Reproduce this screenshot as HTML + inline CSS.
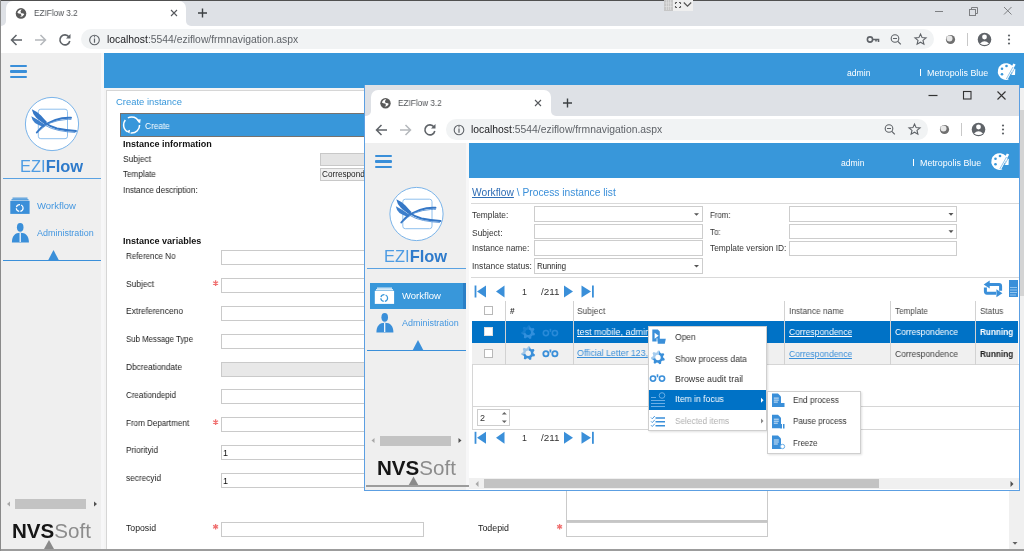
<!DOCTYPE html>
<html><head><meta charset="utf-8">
<style>
*{box-sizing:border-box}
html,body{margin:0;padding:0;width:1024px;height:551px;overflow:hidden;background:#fff;font-family:"Liberation Sans",sans-serif;color:#222}
.a{position:absolute}
.t{position:absolute;white-space:nowrap;line-height:1;will-change:transform}
svg{position:absolute;overflow:visible}
</style></head><body>
<div class="a" style="left:0px;top:0px;width:1024px;height:1px;background:#505050"></div>
<div class="a" style="left:0px;top:1px;width:1024px;height:26px;background:#fff"></div>
<div class="a" style="left:1px;top:1px;width:5px;height:25px;background:#dee1e6;border-bottom-right-radius:5px"></div>
<div class="a" style="left:186px;top:1px;width:838px;height:25px;background:#dee1e6;border-bottom-left-radius:5px"></div>
<div class="a" style="left:6px;top:1px;width:180px;height:8px;background:#dee1e6"></div>
<div class="a" style="left:6px;top:1px;width:180px;height:26px;background:#fff;border-radius:7px 7px 0 0"></div>
<div class="a" style="left:0px;top:0px;width:1px;height:551px;background:#8a8a8a"></div>
<svg style="left:0;top:0" width="1024" height="551"><circle cx="21" cy="13.4" r="5.3" fill="#5a5a5a"/><path d="M17.40,12.80 Q18.20,9.80 21.60,9.20 L20.40,11.70 Q21.50,12.60 20.80,13.70 Q19.00,14.00 17.40,12.80Z" fill="#fff"/><path d="M20.80,13.30 Q23.40,12.80 24.30,14.30 Q23.00,16.70 20.10,17.00 L21.60,15.30 Q20.40,14.40 20.80,13.30Z" fill="#fff"/></svg>
<div class="t" style="left:33.5px;top:8.93px;font-size:9.3px;transform:scaleX(0.8789);transform-origin:0 0;color:#505357">EZIFlow 3.2</div>
<svg style="left:0;top:0" width="1024" height="551"><path d="M171,10 l6,6 M177,10 l-6,6" stroke="#55585c" stroke-width="1.1"/><path d="M202.5,8.5 v9 M198,13 h9" stroke="#3c4043" stroke-width="1.4"/></svg>
<svg style="left:0;top:0" width="1024" height="551"><path d="M935,11.5 h8" stroke="#7d7f82" stroke-width="1"/><rect x="969.5" y="9.5" width="6" height="6" fill="none" stroke="#7d7f82" stroke-width="1"/><path d="M971.5,9.5 v-2 h6 v6 h-2" fill="none" stroke="#7d7f82" stroke-width="1"/><path d="M1004,7 l7.5,7.5 M1011.5,7 l-7.5,7.5" stroke="#7d7f82" stroke-width="1"/></svg>
<div class="a" style="left:1px;top:26px;width:1023px;height:27px;background:#fff"></div>
<div class="a" style="left:81px;top:29px;width:853px;height:20px;background:#f1f3f4;border-radius:10px"></div>
<svg style="left:0;top:0" width="1024" height="551"><path d="M22,40 h-10 M16.5,35 l-5,5 l5,5" stroke="#5f6368" stroke-width="1.5" fill="none"/><path d="M35,40 h10 M40.5,35 l5,5 l-5,5" stroke="#b5b8bc" stroke-width="1.5" fill="none"/><path d="M69,37 a5,5 0 1 0 0.8,4" stroke="#5f6368" stroke-width="1.6" fill="none"/><path d="M70.5,34 v4.5 h-4.5 z" fill="#5f6368"/><circle cx="94.5" cy="40" r="4.8" fill="none" stroke="#5f6368" stroke-width="1.1"/><path d="M94.5,38.5 v4.2" stroke="#5f6368" stroke-width="1.2"/><circle cx="94.5" cy="36.8" r="0.7" fill="#5f6368"/></svg>
<div class="t" style="left:106.8px;top:34.75px;font-size:10.1px;transform:scaleX(1.0263);transform-origin:0 0;color:#5f6368"><span style="color:#202124">localhost</span>:5544/eziflow/frmnavigation.aspx</div>
<svg style="left:0;top:0" width="1024" height="551"><circle cx="870" cy="39.5" r="2.6" fill="none" stroke="#5f6368" stroke-width="1.6"/><path d="M872.5,39.5 h6 v2.5 M876,39.5 v2" stroke="#5f6368" stroke-width="1.6" fill="none"/><circle cx="895" cy="38.5" r="3.8" fill="none" stroke="#5f6368" stroke-width="1.1"/><path d="M893,38.5 h4 M897.8,41.3 l3,3" stroke="#5f6368" stroke-width="1.2"/><path d="M920.5,34 l1.6,3.6 l3.9,0.3 l-3,2.5 l0.9,3.8 l-3.4,-2 l-3.4,2 l0.9,-3.8 l-3,-2.5 l3.9,-0.3 z" fill="none" stroke="#5f6368" stroke-width="1.1"/><circle cx="950.5" cy="39.5" r="4.6" fill="#6f6f6f"/><circle cx="949.5" cy="38.5" r="3" fill="#e8e8e8"/><path d="M967.5,33 v13" stroke="#c8c8c8" stroke-width="1"/><circle cx="984.5" cy="39.5" r="6.8" fill="#5f6368"/><circle cx="984.5" cy="37" r="2.4" fill="#fff"/><path d="M980,43.5 q4.5,-4.5 9,0 q-4.5,3 -9,0z" fill="#fff"/><circle cx="1009" cy="35.5" r="1.1" fill="#5f6368"/><circle cx="1009" cy="39.5" r="1.1" fill="#5f6368"/><circle cx="1009" cy="43.5" r="1.1" fill="#5f6368"/></svg>
<div class="a" style="left:1px;top:53px;width:99.5px;height:498px;background:#efefef"></div>
<div class="a" style="left:100.5px;top:53px;width:3.5px;height:498px;background:#f7f7f8"></div>
<div class="a" style="left:10px;top:64.6px;width:17px;height:2.7px;background:#3a8fd9;border-radius:1px"></div>
<div class="a" style="left:10px;top:70.0px;width:17px;height:2.7px;background:#3a8fd9;border-radius:1px"></div>
<div class="a" style="left:10px;top:75.7px;width:17px;height:2.7px;background:#3a8fd9;border-radius:1px"></div>
<svg style="left:0;top:0" width="1024" height="551"><circle cx="52" cy="124" r="26.6" fill="#fff" stroke="#7ab4ea" stroke-width="1"/><rect x="38.3" y="109.2" width="29.2" height="29.5" rx="2.5" fill="none" stroke="#8fc0ee" stroke-width="1"/><path transform="translate(30,100)" d="M1.8,9.3 Q7,11.5 11,15.5 Q14,19 17,22 L14.8,24.3 Q10.5,21.5 6.5,18 Q2.5,14 1.8,9.3Z" fill="#3577c6"/><path transform="translate(30,100)" d="M1.3,16.3 Q5.5,18.5 9.5,21 Q12.5,23 15.5,25 L14,27.3 Q9,25.5 5,23 Q2,20.5 1.3,16.3Z" fill="#3d7fcc"/><path transform="translate(30,100)" d="M6.8,32.5 Q11,27 16,24 Q24,19.5 32,18.2 Q37,17.5 41,17.8" fill="none" stroke="#3577c6" stroke-width="1.9" stroke-linecap="round"/><path transform="translate(30,100)" d="M9,31 Q14,26 20,23 Q28,20 36,19.5 Q39,19.3 41,19.4" fill="none" stroke="#5a95d8" stroke-width="0.9" stroke-linecap="round"/><path transform="translate(30,100)" d="M13.5,22 Q20,26.5 27,28.5 Q36,30.5 46,31" fill="none" stroke="#3577c6" stroke-width="1.9" stroke-linecap="round"/><path transform="translate(30,100)" d="M14.5,25 Q21,29 29,30.5 Q37,32 45,32.5" fill="none" stroke="#5a95d8" stroke-width="0.9" stroke-linecap="round"/></svg>
<div class="t" style="left:19.5px;top:158.64px;font-size:15.9px;transform:scaleX(1.0371);transform-origin:0 0;"><span style="color:#4e9ce3">EZI</span><span style="font-weight:bold;color:#2f7bcb">Flow</span></div>
<div class="a" style="left:2.5px;top:177.8px;width:98.5px;height:1.3px;background:#5aa2e2"></div>
<svg style="left:0;top:0" width="1024" height="551"><rect x="12.5" y="197.6" width="15" height="1.1" fill="#3a8fd9"/><rect x="11.5" y="199.2" width="17" height="1.1" fill="#3a8fd9"/><rect x="10.3" y="200.79999999999998" width="19.3" height="13.1" fill="#3a8fd9"/><circle cx="19.7" cy="208.1" r="3.4" fill="none" stroke="#fff" stroke-width="1.2" stroke-dasharray="4.5 1.2"/></svg>
<div class="t" style="left:37.3px;top:201.61px;font-size:9.2px;transform:scaleX(1.0343);transform-origin:0 0;color:#4497e0">Workflow</div>
<svg style="left:0;top:0" width="1024" height="551"><ellipse cx="20.2" cy="227.3" rx="3.3" ry="4.4" fill="#3a8fd9"/><path d="M11.9,242.5 C11.9,236 15,232.8 20.4,232.8 C25.8,232.8 28.9,236 28.9,242.5 Z" fill="#3a8fd9"/><path d="M20.2,233 v9" stroke="#fff" stroke-width="1.2"/></svg>
<div class="t" style="left:37.3px;top:228.87px;font-size:8.9px;transform:scaleX(1.0101);transform-origin:0 0;color:#4497e0">Administration</div>
<svg style="left:0;top:0" width="1024" height="551"><path d="M48,260.5 L53.5,250 L59,260.5 Z" fill="#3a8fd9"/></svg>
<div class="a" style="left:2.5px;top:260px;width:98.5px;height:1.3px;background:#3a8fd9"></div>
<div class="a" style="left:15px;top:499px;width:71px;height:10px;background:#c3c3c3"></div>
<svg style="left:0;top:0" width="1024" height="551"><path d="M10,501.5 l-3,2.5 l3,2.5z" fill="#a8a8a8"/><path d="M94,501.5 l3,2.5 l-3,2.5z" fill="#505050"/></svg>
<div class="t" style="left:12px;top:522.05px;font-size:19.9px;transform:scaleX(1.0354);transform-origin:0 0;"><span style="font-weight:bold;color:#161616">NVS</span><span style="color:#8c8c8c">Soft</span></div>
<svg style="left:0;top:0" width="1024" height="551"><path d="M44,549 L49,540 L54,549 Z" fill="#8a8a8a"/></svg>
<div class="a" style="left:1px;top:548.7px;width:103px;height:2.3px;background:#9c9c9c"></div>
<div class="a" style="left:104px;top:53px;width:920px;height:35px;background:#3897da"></div>
<div class="a" style="left:104px;top:88px;width:920px;height:463px;background:#f4f4f4"></div>
<div class="a" style="left:106px;top:90px;width:918px;height:461px;background:#fff;border:1px solid #d6d6d6"></div>
<div class="t" style="left:847px;top:68.82px;font-size:8.6px;transform:scaleX(0.9826);transform-origin:0 0;color:#fff">admin</div>
<div class="a" style="left:919.5px;top:68.6px;width:1px;height:7.8px;background:#fff"></div>
<div class="t" style="left:926.7px;top:68.57px;font-size:8.9px;transform:scaleX(0.9972);transform-origin:0 0;color:#fff">Metropolis Blue</div>
<svg style="left:0;top:0" width="1024" height="551"><path d="M1012.5,66 A8.4,8.4 0 1 0 1009,79.5 L1007.5,78 L1013,69 Z" fill="#fff"/><circle cx="1006.5" cy="66" r="1.3" fill="#3897da"/><circle cx="1002" cy="68.8" r="1.3" fill="#3897da"/><circle cx="1002" cy="74.3" r="1.3" fill="#3897da"/><path d="M1014.5,64 L1007,78" stroke="#fff" stroke-width="2.6"/><path d="M1013,68 L1015.3,69 L1015,75 L1011,75z" fill="#fff"/><path d="M1013,67 L1006.3,79 M1014.8,68 L1008.5,79.5" stroke="#3897da" stroke-width="0.7" opacity="0.8"/></svg>
<div class="t" style="left:116.1px;top:97.63px;font-size:9.3px;transform:scaleX(1.0134);transform-origin:0 0;color:#3897da">Create instance</div>
<div class="a" style="left:120.4px;top:112.8px;width:904px;height:24.6px;background:#3897da;border:1px solid #76726e"></div>
<svg style="left:0;top:0" width="1024" height="551"><circle cx="131.6" cy="125" r="8" fill="none" stroke="#fff" stroke-width="1.5" stroke-dasharray="13.5 3.3"/><path d="M136.5,119.8 l4.2,-0.6 l-0.6,4.2z M129.5,133.5 l-3.2,-2.2 l3.8,-1.6z" fill="#fff"/></svg>
<div class="a" style="left:664.4px;top:0px;width:8.3px;height:10.5px;background:#c6c6c6"></div>
<svg style="left:0;top:0" width="1024" height="551"><path d="M666.5,0 v10 M668.5,0 v10 M670.5,0 v10 M664.5,3 h8 M664.5,6.5 h8" stroke="#e4e4e4" stroke-width="0.6"/></svg>
<div class="a" style="left:672.7px;top:0px;width:20.1px;height:10.5px;background:#efefef"></div>
<svg style="left:0;top:0" width="1024" height="551"><path d="M675.5,2.5 h1.5 M675.5,2.5 v1.5 M680.5,2.5 h-1.5 M680.5,2.5 v1.5 M675.5,7.5 h1.5 M675.5,7.5 v-1.5 M680.5,7.5 h-1.5 M680.5,7.5 v-1.5" stroke="#555" stroke-width="1.1"/><path d="M683.8,2.5 l3.7,3.7 l3.7,-3.7" fill="none" stroke="#555" stroke-width="1.2"/></svg>
<div class="t" style="left:145.2px;top:121.50px;font-size:8.5px;transform:scaleX(0.9720);transform-origin:0 0;color:#fff">Create</div>
<div class="t" style="left:123.3px;top:141.16px;font-size:8.2px;transform:scaleX(1.1014);transform-origin:0 0;font-weight:bold;color:#111">Instance information</div>
<div class="t" style="left:123.3px;top:154.72px;font-size:8.6px;transform:scaleX(0.9766);transform-origin:0 0;color:#1a1a1a">Subject</div>
<div class="t" style="left:123.3px;top:170.02px;font-size:8.6px;transform:scaleX(0.9462);transform-origin:0 0;color:#1a1a1a">Template</div>
<div class="t" style="left:123.3px;top:186.22px;font-size:8.6px;transform:scaleX(0.9476);transform-origin:0 0;color:#1a1a1a">Instance description:</div>
<div class="a" style="left:320px;top:153px;width:60px;height:12.5px;background:#e4e4e4;border:1px solid #c8c8c8"></div>
<div class="a" style="left:320px;top:168px;width:60px;height:13px;background:#efefef;border:1px solid #c8c8c8"></div>
<div class="t" style="left:322px;top:171.06px;font-size:8.2px;color:#222">Correspond</div>
<div class="t" style="left:123px;top:237.76px;font-size:8.2px;transform:scaleX(1.1014);transform-origin:0 0;font-weight:bold;color:#111">Instance variables</div>
<div class="t" style="left:125.7px;top:251.82px;font-size:8.6px;transform:scaleX(0.9334);transform-origin:0 0;color:#1a1a1a">Reference No</div>
<div class="a" style="left:221.2px;top:250.3px;width:160px;height:15px;background:#fff;border:1px solid #cacaca"></div>
<div class="t" style="left:125.7px;top:279.62px;font-size:8.6px;transform:scaleX(0.9766);transform-origin:0 0;color:#1a1a1a">Subject</div>
<svg style="left:0;top:0" width="1024" height="551"><g stroke="#f07070" stroke-width="1.3"><path d="M215.6,280.3 v5.6 M213.1,281.70000000000005 l5,2.8 M213.1,284.5 l5,-2.8"/></g></svg>
<div class="a" style="left:221.2px;top:278.1px;width:160px;height:15px;background:#fff;border:1px solid #cacaca"></div>
<div class="t" style="left:125.7px;top:307.42px;font-size:8.6px;transform:scaleX(0.9780);transform-origin:0 0;color:#1a1a1a">Extreferenceno</div>
<div class="a" style="left:221.2px;top:305.9px;width:160px;height:15px;background:#fff;border:1px solid #cacaca"></div>
<div class="t" style="left:125.7px;top:335.22px;font-size:8.6px;transform:scaleX(0.9125);transform-origin:0 0;color:#1a1a1a">Sub Message Type</div>
<div class="a" style="left:221.2px;top:333.7px;width:160px;height:15px;background:#fff;border:1px solid #cacaca"></div>
<div class="t" style="left:125.7px;top:363.02px;font-size:8.6px;transform:scaleX(0.9606);transform-origin:0 0;color:#1a1a1a">Dbcreationdate</div>
<div class="a" style="left:221.2px;top:361.5px;width:160px;height:15px;background:#e8e8e8;border:1px solid #cacaca"></div>
<div class="t" style="left:125.7px;top:390.82px;font-size:8.6px;transform:scaleX(0.9343);transform-origin:0 0;color:#1a1a1a">Creationdepid</div>
<div class="a" style="left:221.2px;top:389.3px;width:160px;height:15px;background:#fff;border:1px solid #cacaca"></div>
<div class="t" style="left:125.7px;top:418.62px;font-size:8.6px;transform:scaleX(0.9355);transform-origin:0 0;color:#1a1a1a">From Department</div>
<svg style="left:0;top:0" width="1024" height="551"><g stroke="#f07070" stroke-width="1.3"><path d="M215.6,419.3 v5.6 M213.1,420.70000000000005 l5,2.8 M213.1,423.5 l5,-2.8"/></g></svg>
<div class="a" style="left:221.2px;top:417.1px;width:160px;height:15px;background:#fff;border:1px solid #cacaca"></div>
<div class="t" style="left:125.7px;top:446.42px;font-size:8.6px;transform:scaleX(0.9570);transform-origin:0 0;color:#1a1a1a">Priorityid</div>
<div class="a" style="left:221.2px;top:444.9px;width:160px;height:15px;background:#fff;border:1px solid #cacaca"></div>
<div class="t" style="left:223px;top:448.78px;font-size:9px;color:#111">1</div>
<div class="t" style="left:125.7px;top:474.22px;font-size:8.6px;transform:scaleX(0.9643);transform-origin:0 0;color:#1a1a1a">secrecyid</div>
<div class="a" style="left:221.2px;top:472.7px;width:160px;height:15px;background:#fff;border:1px solid #cacaca"></div>
<div class="t" style="left:223px;top:476.58px;font-size:9px;color:#111">1</div>
<div class="t" style="left:125.7px;top:524.02px;font-size:8.6px;transform:scaleX(1.0127);transform-origin:0 0;color:#1a1a1a">Toposid</div>
<svg style="left:0;top:0" width="1024" height="551"><g stroke="#f07070" stroke-width="1.3"><path d="M215.6,524 v5.6 M213.1,525.4 l5,2.8 M213.1,528.2 l5,-2.8"/></g></svg>
<div class="a" style="left:221.2px;top:522px;width:203px;height:15px;background:#fff;border:1px solid #cacaca"></div>
<div class="t" style="left:478px;top:524.02px;font-size:8.6px;transform:scaleX(1.0296);transform-origin:0 0;color:#1a1a1a">Todepid</div>
<svg style="left:0;top:0" width="1024" height="551"><g stroke="#f07070" stroke-width="1.3"><path d="M559.6,524 v5.6 M557.1,525.4 l5,2.8 M557.1,528.2 l5,-2.8"/></g></svg>
<div class="a" style="left:565.5px;top:522.3px;width:202px;height:14.5px;background:#fff;border:1px solid #cacaca"></div>
<div class="a" style="left:565.5px;top:480px;width:202px;height:42px;background:#fff;border:1px solid #cacaca;border-bottom:2px solid #c6c6c6"></div>
<div class="a" style="left:1009px;top:491px;width:15px;height:58px;background:#f0f0f0"></div>
<svg style="left:0;top:0" width="1024" height="551"><path d="M1012.5,542 h5 l-2.5,2.8z" fill="#606060"/></svg>
<div class="a" style="left:104px;top:549px;width:920px;height:2px;background:#9c9c9c"></div>
<div class="a" style="left:1020px;top:88px;width:4px;height:22px;background:#f0f0f0"></div>
<div class="a" style="left:1020px;top:110px;width:4px;height:186px;background:#d4d4d4"></div>
<div class="a" style="left:1020px;top:296px;width:4px;height:195px;background:#f0f0f0"></div>
<div class="a" style="left:364px;top:85px;width:656px;height:406px;border:1px solid #5c9fe2;border-top:none;background:#fff"></div>
<div class="a" style="left:365px;top:85px;width:654px;height:31px;background:#fff"></div>
<div class="a" style="left:365px;top:85px;width:654px;height:5.3px;background:#dee1e6"></div>
<div class="a" style="left:365px;top:85px;width:5.5px;height:31px;background:#dee1e6;border-bottom-right-radius:5px"></div>
<div class="a" style="left:551px;top:85px;width:468px;height:31px;background:#dee1e6;border-bottom-left-radius:5px"></div>
<div class="a" style="left:370.5px;top:90px;width:180.5px;height:8px;background:#dee1e6"></div>
<div class="a" style="left:370.5px;top:90.3px;width:180.5px;height:25.7px;background:#fff;border-radius:7px 7px 0 0"></div>
<svg style="left:0;top:0" width="1024" height="551"><circle cx="385.5" cy="103.2" r="5.2" fill="#5a5a5a"/><path d="M381.90,102.60 Q382.70,99.60 386.10,99.00 L384.90,101.50 Q386.00,102.40 385.30,103.50 Q383.50,103.80 381.90,102.60Z" fill="#fff"/><path d="M385.30,103.10 Q387.90,102.60 388.80,104.10 Q387.50,106.50 384.60,106.80 L386.10,105.10 Q384.90,104.20 385.30,103.10Z" fill="#fff"/></svg>
<div class="t" style="left:397.9px;top:99.33px;font-size:9.3px;transform:scaleX(0.8809);transform-origin:0 0;color:#505357">EZIFlow 3.2</div>
<svg style="left:0;top:0" width="1024" height="551"><path d="M535,100 l6,6 M541,100 l-6,6" stroke="#55585c" stroke-width="1.1"/><path d="M567.5,98.5 v9 M563,103 h9" stroke="#3c4043" stroke-width="1.4"/></svg>
<svg style="left:0;top:0" width="1024" height="551"><path d="M928.5,95.5 h9" stroke="#333" stroke-width="1.2"/><rect x="963.5" y="91.5" width="7.5" height="7.5" fill="none" stroke="#333" stroke-width="1.1"/><path d="M997.5,91.5 l8,8 M1005.5,91.5 l-8,8" stroke="#333" stroke-width="1.1"/></svg>
<div class="a" style="left:365px;top:116px;width:654px;height:27px;background:#fff"></div>
<div class="a" style="left:446px;top:119px;width:482px;height:20.5px;background:#f1f3f4;border-radius:10.25px"></div>
<svg style="left:0;top:0" width="1024" height="551"><path d="M387,130 h-10 M381.5,125 l-5,5 l5,5" stroke="#5f6368" stroke-width="1.5" fill="none"/><path d="M400,130 h10 M405.5,125 l5,5 l-5,5" stroke="#b5b8bc" stroke-width="1.5" fill="none"/><path d="M434,127 a5,5 0 1 0 0.8,4" stroke="#5f6368" stroke-width="1.6" fill="none"/><path d="M435.5,124 v4.5 h-4.5 z" fill="#5f6368"/><circle cx="459" cy="130" r="4.8" fill="none" stroke="#5f6368" stroke-width="1.1"/><path d="M459,128.5 v4.2" stroke="#5f6368" stroke-width="1.2"/><circle cx="459" cy="126.8" r="0.7" fill="#5f6368"/></svg>
<div class="t" style="left:471.2px;top:124.85px;font-size:10.1px;transform:scaleX(1.0263);transform-origin:0 0;color:#5f6368"><span style="color:#202124">localhost</span>:5544/eziflow/frmnavigation.aspx</div>
<svg style="left:0;top:0" width="1024" height="551"><circle cx="889" cy="128.5" r="3.8" fill="none" stroke="#5f6368" stroke-width="1.1"/><path d="M887,128.5 h4 M891.8,131.3 l3,3" stroke="#5f6368" stroke-width="1.2"/><path d="M914.5,124 l1.6,3.6 l3.9,0.3 l-3,2.5 l0.9,3.8 l-3.4,-2 l-3.4,2 l0.9,-3.8 l-3,-2.5 l3.9,-0.3 z" fill="none" stroke="#5f6368" stroke-width="1.1"/><circle cx="944.5" cy="129.5" r="4.6" fill="#6f6f6f"/><circle cx="943.5" cy="128.5" r="3" fill="#e8e8e8"/><path d="M961.5,123 v13" stroke="#c8c8c8" stroke-width="1"/><circle cx="978.5" cy="129.5" r="6.8" fill="#5f6368"/><circle cx="978.5" cy="127" r="2.4" fill="#fff"/><path d="M974,133.5 q4.5,-4.5 9,0 q-4.5,3 -9,0z" fill="#fff"/><circle cx="1003" cy="125.5" r="1.1" fill="#5f6368"/><circle cx="1003" cy="129.5" r="1.1" fill="#5f6368"/><circle cx="1003" cy="133.5" r="1.1" fill="#5f6368"/></svg>
<div class="a" style="left:365px;top:143px;width:100.5px;height:347px;background:#efefef"></div>
<div class="a" style="left:465.5px;top:143px;width:3.5px;height:347px;background:#f7f7f8"></div>
<div class="a" style="left:374.5px;top:154.6px;width:17px;height:2.7px;background:#3a8fd9;border-radius:1px"></div>
<div class="a" style="left:374.5px;top:160.0px;width:17px;height:2.7px;background:#3a8fd9;border-radius:1px"></div>
<div class="a" style="left:374.5px;top:165.7px;width:17px;height:2.7px;background:#3a8fd9;border-radius:1px"></div>
<svg style="left:0;top:0" width="1024" height="551"><circle cx="416.5" cy="214" r="26.6" fill="#fff" stroke="#7ab4ea" stroke-width="1"/><rect x="402.8" y="199.2" width="29.2" height="29.5" rx="2.5" fill="none" stroke="#8fc0ee" stroke-width="1"/><path transform="translate(394.5,190)" d="M1.8,9.3 Q7,11.5 11,15.5 Q14,19 17,22 L14.8,24.3 Q10.5,21.5 6.5,18 Q2.5,14 1.8,9.3Z" fill="#3577c6"/><path transform="translate(394.5,190)" d="M1.3,16.3 Q5.5,18.5 9.5,21 Q12.5,23 15.5,25 L14,27.3 Q9,25.5 5,23 Q2,20.5 1.3,16.3Z" fill="#3d7fcc"/><path transform="translate(394.5,190)" d="M6.8,32.5 Q11,27 16,24 Q24,19.5 32,18.2 Q37,17.5 41,17.8" fill="none" stroke="#3577c6" stroke-width="1.9" stroke-linecap="round"/><path transform="translate(394.5,190)" d="M9,31 Q14,26 20,23 Q28,20 36,19.5 Q39,19.3 41,19.4" fill="none" stroke="#5a95d8" stroke-width="0.9" stroke-linecap="round"/><path transform="translate(394.5,190)" d="M13.5,22 Q20,26.5 27,28.5 Q36,30.5 46,31" fill="none" stroke="#3577c6" stroke-width="1.9" stroke-linecap="round"/><path transform="translate(394.5,190)" d="M14.5,25 Q21,29 29,30.5 Q37,32 45,32.5" fill="none" stroke="#5a95d8" stroke-width="0.9" stroke-linecap="round"/></svg>
<div class="t" style="left:384.0px;top:248.64px;font-size:15.9px;transform:scaleX(1.0371);transform-origin:0 0;"><span style="color:#4e9ce3">EZI</span><span style="font-weight:bold;color:#2f7bcb">Flow</span></div>
<div class="a" style="left:367.0px;top:267.8px;width:98.5px;height:1.3px;background:#5aa2e2"></div>
<div class="a" style="left:369.75px;top:283px;width:95.75px;height:26px;background:#3897da"></div>
<div class="a" style="left:463.0px;top:283px;width:2.5px;height:26px;background:#2a7fc6"></div>
<svg style="left:0;top:0" width="1024" height="551"><rect x="377.0" y="287.6" width="15" height="1.1" fill="#fff"/><rect x="376.0" y="289.20000000000005" width="17" height="1.1" fill="#fff"/><rect x="374.8" y="290.8" width="19.3" height="13.1" fill="#fff"/><circle cx="384.2" cy="298.1" r="3.4" fill="none" stroke="#3897da" stroke-width="1.2" stroke-dasharray="4.5 1.2"/></svg>
<div class="t" style="left:401.8px;top:291.61px;font-size:9.2px;transform:scaleX(1.0343);transform-origin:0 0;color:#fff">Workflow</div>
<svg style="left:0;top:0" width="1024" height="551"><ellipse cx="384.7" cy="317.3" rx="3.3" ry="4.4" fill="#3a8fd9"/><path d="M376.4,332.5 C376.4,326 379.5,322.8 384.9,322.8 C390.3,322.8 393.4,326 393.4,332.5 Z" fill="#3a8fd9"/><path d="M384.7,323 v9" stroke="#fff" stroke-width="1.2"/></svg>
<div class="t" style="left:401.8px;top:318.87px;font-size:8.9px;transform:scaleX(1.0101);transform-origin:0 0;color:#4497e0">Administration</div>
<svg style="left:0;top:0" width="1024" height="551"><path d="M412.5,350.5 L418.0,340 L423.5,350.5 Z" fill="#3a8fd9"/></svg>
<div class="a" style="left:367.0px;top:350px;width:98.5px;height:1.3px;background:#3a8fd9"></div>
<div class="a" style="left:379.5px;top:435.5px;width:71px;height:10px;background:#c3c3c3"></div>
<svg style="left:0;top:0" width="1024" height="551"><path d="M374.5,438.0 l-3,2.5 l3,2.5z" fill="#a8a8a8"/><path d="M458.5,438.0 l3,2.5 l-3,2.5z" fill="#505050"/></svg>
<div class="t" style="left:376.5px;top:458.55px;font-size:19.9px;transform:scaleX(1.0354);transform-origin:0 0;"><span style="font-weight:bold;color:#161616">NVS</span><span style="color:#8c8c8c">Soft</span></div>
<svg style="left:0;top:0" width="1024" height="551"><path d="M408.5,485.5 L413.5,476.5 L418.5,485.5 Z" fill="#8a8a8a"/></svg>
<div class="a" style="left:365.5px;top:485.2px;width:103px;height:2.3px;background:#9c9c9c"></div>
<div class="a" style="left:469px;top:143px;width:550px;height:34.5px;background:#3897da"></div>
<div class="t" style="left:840.5px;top:158.82px;font-size:8.6px;transform:scaleX(0.9826);transform-origin:0 0;color:#fff">admin</div>
<div class="a" style="left:912.8px;top:158.6px;width:1px;height:7.8px;background:#fff"></div>
<div class="t" style="left:920.2px;top:158.57px;font-size:8.9px;transform:scaleX(0.9972);transform-origin:0 0;color:#fff">Metropolis Blue</div>
<svg style="left:0;top:0" width="1024" height="551"><path d="M1006.0,156 A8.4,8.4 0 1 0 1002.5,169.5 L1001.0,168 L1006.5,159 Z" fill="#fff"/><circle cx="1000.0" cy="156" r="1.3" fill="#3897da"/><circle cx="995.5" cy="158.8" r="1.3" fill="#3897da"/><circle cx="995.5" cy="164.3" r="1.3" fill="#3897da"/><path d="M1008.0,154 L1000.5,168" stroke="#fff" stroke-width="2.6"/><path d="M1006.5,158 L1008.8,159 L1008.5,165 L1004.5,165z" fill="#fff"/><path d="M1006.5,157 L999.8,169 M1008.3,158 L1002.0,169.5" stroke="#3897da" stroke-width="0.7" opacity="0.8"/></svg>
<div class="t" style="left:471.8px;top:187.77px;font-size:10.2px;transform:scaleX(1.0052);transform-origin:0 0;color:#3a8fd9"><span style="color:#2f6db5;text-decoration:underline">Workflow</span> \ Process instance list</div>
<div class="a" style="left:470.6px;top:203px;width:548px;height:1px;background:#d9d9d9"></div>
<div class="t" style="left:472px;top:211.29px;font-size:8.4px;transform:scaleX(0.9914);transform-origin:0 0;color:#333">Template:</div>
<div class="a" style="left:534.4px;top:206.2px;width:168.6px;height:16.0px;background:#fff;border:1px solid #cdcdcd"></div>
<svg style="left:0;top:0" width="1024" height="551"><path d="M694,213.2 h5 l-2.5,2.6z" fill="#555"/></svg>
<div class="t" style="left:472px;top:228.59px;font-size:8.4px;transform:scaleX(1.0077);transform-origin:0 0;color:#333">Subject:</div>
<div class="a" style="left:534.4px;top:224px;width:168.6px;height:14.599999999999994px;background:#fff;border:1px solid #cdcdcd"></div>
<div class="t" style="left:472px;top:244.39px;font-size:8.4px;transform:scaleX(0.9989);transform-origin:0 0;color:#333">Instance name:</div>
<div class="a" style="left:534.4px;top:240.3px;width:168.6px;height:15.599999999999994px;background:#fff;border:1px solid #cdcdcd"></div>
<div class="t" style="left:472px;top:262.19px;font-size:8.4px;transform:scaleX(1.0192);transform-origin:0 0;color:#333">Instance status:</div>
<div class="a" style="left:534.4px;top:258px;width:168.6px;height:16px;background:#fff;border:1px solid #cdcdcd"></div>
<div class="t" style="left:537.3px;top:261.68px;font-size:9px;transform:scaleX(0.8649);transform-origin:0 0;color:#222">Running</div>
<svg style="left:0;top:0" width="1024" height="551"><path d="M694,265.0 h5 l-2.5,2.6z" fill="#555"/></svg>
<div class="t" style="left:710px;top:210.79px;font-size:8.4px;transform:scaleX(0.9371);transform-origin:0 0;color:#333">From:</div>
<div class="a" style="left:788.8px;top:206.3px;width:168.2px;height:15.5px;background:#fff;border:1px solid #cdcdcd"></div>
<svg style="left:0;top:0" width="1024" height="551"><path d="M948.5,213.05 h5 l-2.5,2.6z" fill="#555"/></svg>
<div class="t" style="left:710px;top:227.99px;font-size:8.4px;transform:scaleX(0.9399);transform-origin:0 0;color:#333">To:</div>
<div class="a" style="left:788.8px;top:224px;width:168.2px;height:14.699999999999989px;background:#fff;border:1px solid #cdcdcd"></div>
<svg style="left:0;top:0" width="1024" height="551"><path d="M948.5,230.35 h5 l-2.5,2.6z" fill="#555"/></svg>
<div class="t" style="left:710px;top:244.09px;font-size:8.4px;transform:scaleX(0.9994);transform-origin:0 0;color:#333">Template version ID:</div>
<div class="a" style="left:788.8px;top:240.8px;width:168.2px;height:14.799999999999983px;background:#fff;border:1px solid #cdcdcd"></div>
<div class="a" style="left:470.6px;top:277px;width:548px;height:1px;background:#d9d9d9"></div>
<svg style="left:0;top:0" width="1024" height="551"><g fill="none" stroke="#3a8fd9" stroke-width="3"><path d="M989,284.6 H999 Q1000.6,284.6 1000.6,286.2 V290.8"/><path d="M996,293.2 H987 Q985.4,293.2 985.4,291.6 V287.6"/></g><path d="M983.7,284.6 L989.7,280.6 L989.7,288.6z M1002.4,293.2 L996.4,289.2 L996.4,297.2z" fill="#3a8fd9"/></svg>
<div class="a" style="left:1009px;top:280px;width:9px;height:17px;background:#3a8fd9"></div>
<svg style="left:0;top:0" width="1024" height="551"><path d="M1010,287.5 h7 M1010,290 h7 M1010,292.5 h7 M1010,295 h6" stroke="#9ccbf2" stroke-width="0.9"/></svg>
<svg style="left:0;top:0" width="1024" height="551"><rect x="474.6" y="285.5" width="1.8" height="12" fill="#3a8fd9"/><path d="M486,285.5 v12 l-9,-6z" fill="#3a8fd9"/><path d="M504.5,285.5 v12 l-8.5,-6z" fill="#3a8fd9"/><path d="M564,285.5 v12 l9,-6z" fill="#3a8fd9"/><path d="M581.5,285.5 v12 l9.5,-6z" fill="#3a8fd9"/><rect x="592" y="285.5" width="1.8" height="12" fill="#3a8fd9"/></svg>
<div class="t" style="left:521.5px;top:287.75px;font-size:8.8px;color:#333">1</div>
<div class="t" style="left:541px;top:287.75px;font-size:8.8px;transform:scaleX(1.1233);transform-origin:0 0;color:#333">/211</div>
<div class="a" style="left:472px;top:300.5px;width:545.5px;height:21px;background:#fff"></div>
<div class="a" style="left:472px;top:321.4px;width:545.5px;height:21.4px;background:#0072c6"></div>
<div class="a" style="left:472px;top:342.8px;width:545.5px;height:21.5px;background:#f0f0f0"></div>
<div class="a" style="left:472px;top:364.2px;width:547px;height:1px;background:#d6d6d6"></div>
<div class="a" style="left:472px;top:364px;width:1px;height:66px;background:#d6d6d6"></div>
<div class="a" style="left:472px;top:405.5px;width:547px;height:1px;background:#d6d6d6"></div>
<div class="a" style="left:472px;top:429.2px;width:547px;height:1px;background:#d6d6d6"></div>
<div class="a" style="left:505.3px;top:300.5px;width:1px;height:64px;background:#d2d2d2"></div>
<div class="a" style="left:572.5px;top:300.5px;width:1px;height:64px;background:#d2d2d2"></div>
<div class="a" style="left:784.3px;top:300.5px;width:1px;height:64px;background:#d2d2d2"></div>
<div class="a" style="left:890.2px;top:300.5px;width:1px;height:64px;background:#d2d2d2"></div>
<div class="a" style="left:975.4px;top:300.5px;width:1px;height:64px;background:#d2d2d2"></div>
<div class="a" style="left:484px;top:306px;width:9px;height:9px;background:#fff;border:1px solid #b8b8b8"></div>
<div class="a" style="left:484px;top:327px;width:9px;height:9px;background:#fff;border:1px solid #e0e0e0"></div>
<div class="a" style="left:484px;top:348.5px;width:9px;height:9px;background:#fff;border:1px solid #b8b8b8"></div>
<div class="t" style="left:509.5px;top:307.07px;font-size:8.3px;color:#333;font-weight:bold">#</div>
<div class="t" style="left:577.3px;top:306.65px;font-size:8.8px;transform:scaleX(0.9576);transform-origin:0 0;color:#444">Subject</div>
<div class="t" style="left:788.8px;top:306.65px;font-size:8.8px;transform:scaleX(0.9529);transform-origin:0 0;color:#444">Instance name</div>
<div class="t" style="left:894.8px;top:306.65px;font-size:8.8px;transform:scaleX(0.9243);transform-origin:0 0;color:#444">Template</div>
<div class="t" style="left:980px;top:306.65px;font-size:8.8px;transform:scaleX(0.9338);transform-origin:0 0;color:#444">Status</div>
<svg style="left:0;top:0" width="1024" height="551"><defs><clipPath id="gq1"><path d="M528.2,332.3 L519.2,334.3 L519.2,323.3 L530.2,323.3 Z"/></clipPath><clipPath id="gr1"><path d="M528.2,332.3 L530.2,323.3 L537.2,323.3 L537.2,341.3 L519.2,341.3 L519.2,334.3 Z"/></clipPath><mask id="gm1"><rect x="518.2" y="322.3" width="20" height="20" fill="#fff"/><circle cx="528.2" cy="332.3" r="2.7" fill="#000"/></mask></defs><g opacity="0.55" mask="url(#gm1)"><polygon points="533.40,332.30 535.02,333.86 534.51,335.34 532.27,335.54 531.44,336.37 531.24,338.61 529.76,339.12 528.20,337.50 527.04,337.37 525.16,338.61 523.84,337.77 524.13,335.54 523.51,334.56 521.38,333.86 521.20,332.30 523.13,331.14 523.51,330.04 522.73,327.94 523.84,326.83 525.94,327.61 527.04,327.23 528.20,325.30 529.76,325.48 530.46,327.61 531.44,328.23 533.67,327.94 534.51,329.26 533.27,331.14" fill="#5aa8ee" clip-path="url(#gr1)"/><polygon points="533.40,332.30 535.02,333.86 534.51,335.34 532.27,335.54 531.44,336.37 531.24,338.61 529.76,339.12 528.20,337.50 527.04,337.37 525.16,338.61 523.84,337.77 524.13,335.54 523.51,334.56 521.38,333.86 521.20,332.30 523.13,331.14 523.51,330.04 522.73,327.94 523.84,326.83 525.94,327.61 527.04,327.23 528.20,325.30 529.76,325.48 530.46,327.61 531.44,328.23 533.67,327.94 534.51,329.26 533.27,331.14" fill="#5aa8ee" opacity="0.45" clip-path="url(#gq1)"/></g><g opacity="0.45" fill="none" stroke="#5aa8ee" stroke-width="1.6"><circle cx="545.9" cy="333.1" r="2.6"/><circle cx="554.9" cy="333.1" r="2.6"/><path d="M550.4,331.8 v-3"/></g></svg>
<svg style="left:0;top:0" width="1024" height="551"><defs><clipPath id="gq2"><path d="M528.2,353.3 L519.2,355.3 L519.2,344.3 L530.2,344.3 Z"/></clipPath><clipPath id="gr2"><path d="M528.2,353.3 L530.2,344.3 L537.2,344.3 L537.2,362.3 L519.2,362.3 L519.2,355.3 Z"/></clipPath><mask id="gm2"><rect x="518.2" y="343.3" width="20" height="20" fill="#fff"/><circle cx="528.2" cy="353.3" r="2.7" fill="#000"/></mask></defs><g opacity="1" mask="url(#gm2)"><polygon points="533.40,353.30 535.02,354.86 534.51,356.34 532.27,356.54 531.44,357.37 531.24,359.61 529.76,360.12 528.20,358.50 527.04,358.37 525.16,359.61 523.84,358.77 524.13,356.54 523.51,355.56 521.38,354.86 521.20,353.30 523.13,352.14 523.51,351.04 522.73,348.94 523.84,347.83 525.94,348.61 527.04,348.23 528.20,346.30 529.76,346.48 530.46,348.61 531.44,349.23 533.67,348.94 534.51,350.26 533.27,352.14" fill="#3a8fd9" clip-path="url(#gr2)"/><polygon points="533.40,353.30 535.02,354.86 534.51,356.34 532.27,356.54 531.44,357.37 531.24,359.61 529.76,360.12 528.20,358.50 527.04,358.37 525.16,359.61 523.84,358.77 524.13,356.54 523.51,355.56 521.38,354.86 521.20,353.30 523.13,352.14 523.51,351.04 522.73,348.94 523.84,347.83 525.94,348.61 527.04,348.23 528.20,346.30 529.76,346.48 530.46,348.61 531.44,349.23 533.67,348.94 534.51,350.26 533.27,352.14" fill="#3a8fd9" opacity="0.45" clip-path="url(#gq2)"/></g><g opacity="1" fill="none" stroke="#3a8fd9" stroke-width="1.8"><circle cx="545.9" cy="353.8" r="2.6"/><circle cx="554.9" cy="353.8" r="2.6"/><path d="M550.4,352.5 v-3"/></g></svg>
<div class="t" style="left:577.3px;top:327.51px;font-size:9.2px;transform:scaleX(0.9790);transform-origin:0 0;color:#fff"><u>test mobile, admin</u></div>
<div class="t" style="left:577.3px;top:349.31px;font-size:9.2px;transform:scaleX(0.9542);transform-origin:0 0;color:#3a8fd9"><u>Official Letter 123, </u></div>
<div class="t" style="left:788.8px;top:328.11px;font-size:9.2px;transform:scaleX(0.9332);transform-origin:0 0;color:#fff"><u>Correspondence</u></div>
<div class="t" style="left:788.8px;top:349.91px;font-size:9.2px;transform:scaleX(0.9332);transform-origin:0 0;color:#3a8fd9"><u>Correspondence</u></div>
<div class="t" style="left:894.8px;top:328.11px;font-size:9.2px;transform:scaleX(0.9303);transform-origin:0 0;color:#fff">Correspondence</div>
<div class="t" style="left:894.8px;top:349.91px;font-size:9.2px;transform:scaleX(0.9303);transform-origin:0 0;color:#444">Correspondence</div>
<div class="t" style="left:980px;top:328.45px;font-size:8.8px;transform:scaleX(0.9307);transform-origin:0 0;color:#fff;font-weight:bold">Running</div>
<div class="t" style="left:980px;top:350.25px;font-size:8.8px;transform:scaleX(0.9307);transform-origin:0 0;color:#222;font-weight:bold">Running</div>
<div class="a" style="left:476.7px;top:409.3px;width:33.3px;height:16.4px;background:#fff;border:1px solid #cdcdcd"></div>
<div class="t" style="left:479.5px;top:413.88px;font-size:9px;color:#333">2</div>
<svg style="left:0;top:0" width="1024" height="551"><path d="M501.8,414.5 l2.5,-2.5 l2.5,2.5z M501.8,420.5 l2.5,2.5 l2.5,-2.5z" fill="#666"/></svg>
<svg style="left:0;top:0" width="1024" height="551"><rect x="474.6" y="431.8" width="1.8" height="12" fill="#3a8fd9"/><path d="M486,431.8 v12 l-9,-6z" fill="#3a8fd9"/><path d="M504.5,431.8 v12 l-8.5,-6z" fill="#3a8fd9"/><path d="M564,431.8 v12 l9,-6z" fill="#3a8fd9"/><path d="M581.5,431.8 v12 l9.5,-6z" fill="#3a8fd9"/><rect x="592" y="431.8" width="1.8" height="12" fill="#3a8fd9"/></svg>
<div class="t" style="left:521.5px;top:434.05px;font-size:8.8px;color:#333">1</div>
<div class="t" style="left:541px;top:434.05px;font-size:8.8px;transform:scaleX(1.1233);transform-origin:0 0;color:#333">/211</div>
<div class="a" style="left:469px;top:478.4px;width:550px;height:11px;background:#f0f0f0"></div>
<div class="a" style="left:483.6px;top:479.4px;width:395px;height:9px;background:#c3c3c3"></div>
<svg style="left:0;top:0" width="1024" height="551"><path d="M478.5,481 l-3,3 l3,3z" fill="#a8a8a8"/><path d="M1010.5,481 l3,3 l-3,3z" fill="#505050"/></svg>
<div class="a" style="left:648px;top:326.3px;width:119px;height:105px;background:#fff;border:1px solid #cfcfcf;box-shadow:1px 1px 2px rgba(0,0,0,0.12)"></div>
<div class="a" style="left:649px;top:390.4px;width:117px;height:19.8px;background:#0072c6"></div>
<div class="t" style="left:675.1px;top:333.37px;font-size:8.9px;transform:scaleX(0.9577);transform-origin:0 0;color:#333">Open</div>
<div class="t" style="left:675.1px;top:354.57px;font-size:8.9px;transform:scaleX(0.9512);transform-origin:0 0;color:#333">Show process data</div>
<div class="t" style="left:675.1px;top:374.77px;font-size:8.9px;transform:scaleX(0.9930);transform-origin:0 0;color:#333">Browse audit trail</div>
<div class="t" style="left:675.1px;top:395.47px;font-size:8.9px;transform:scaleX(0.9699);transform-origin:0 0;color:#fff">Item in focus</div>
<div class="t" style="left:675.1px;top:416.67px;font-size:8.9px;transform:scaleX(0.9310);transform-origin:0 0;color:#b0b0b0">Selected items</div>
<svg style="left:0;top:0" width="1024" height="551"><path d="M761,397.8 v5 l2.5,-2.5z" fill="#fff"/><path d="M761,418.5 v5 l2.5,-2.5z" fill="#888"/></svg>
<svg style="left:0;top:0" width="1024" height="551"><path d="M652.3,329.5 h5.5 l2,2 v10 h-7.5z" fill="#3a8fd9"/><path d="M654.6,332.8 v6 l4,-3z" fill="#fff"/><path d="M657.5,338.8 h8.3 l-1,5 h-7.3z" fill="#3a8fd9"/><path d="M657,338.3 v5.5" stroke="#fff" stroke-width="0.8"/><defs><clipPath id="gq3"><path d="M658,357.5 L649,359.5 L649,348.5 L660,348.5 Z"/></clipPath><clipPath id="gr3"><path d="M658,357.5 L660,348.5 L667,348.5 L667,366.5 L649,366.5 L649,359.5 Z"/></clipPath><mask id="gm3"><rect x="648" y="347.5" width="20" height="20" fill="#fff"/><circle cx="658" cy="357.5" r="2.7" fill="#000"/></mask></defs><g opacity="1" mask="url(#gm3)"><polygon points="663.20,357.50 664.82,359.06 664.31,360.54 662.07,360.74 661.24,361.57 661.04,363.81 659.56,364.32 658.00,362.70 656.84,362.57 654.96,363.81 653.64,362.97 653.93,360.74 653.31,359.76 651.18,359.06 651.00,357.50 652.93,356.34 653.31,355.24 652.53,353.14 653.64,352.03 655.74,352.81 656.84,352.43 658.00,350.50 659.56,350.68 660.26,352.81 661.24,353.43 663.47,353.14 664.31,354.46 663.07,356.34" fill="#3a8fd9" clip-path="url(#gr3)"/><polygon points="663.20,357.50 664.82,359.06 664.31,360.54 662.07,360.74 661.24,361.57 661.04,363.81 659.56,364.32 658.00,362.70 656.84,362.57 654.96,363.81 653.64,362.97 653.93,360.74 653.31,359.76 651.18,359.06 651.00,357.50 652.93,356.34 653.31,355.24 652.53,353.14 653.64,352.03 655.74,352.81 656.84,352.43 658.00,350.50 659.56,350.68 660.26,352.81 661.24,353.43 663.47,353.14 664.31,354.46 663.07,356.34" fill="#3a8fd9" opacity="0.45" clip-path="url(#gq3)"/></g><g opacity="1" fill="none" stroke="#3a8fd9" stroke-width="1.6"><circle cx="653.0" cy="378.6" r="2.6"/><circle cx="662.0" cy="378.6" r="2.6"/><path d="M657.5,377.3 v-3"/></g><g opacity="0.75" stroke="#8fc3f0" stroke-width="1" fill="none"><path d="M651,400.5 h14 M651,403.5 h14 M651,406.5 h14 M651,397.5 h5"/><circle cx="662" cy="395.5" r="2.8"/></g><g stroke="#3a8fd9" fill="none"><path d="M655.5,418 h9.5 M655.5,421.8 h9.5 M655.5,425.7 h9.5" stroke-width="1.6"/><path d="M651,417.5 l1.3,1.3 l2.5,-2.8 M651,421.3 l1.3,1.3 l2.5,-2.8 M651,425.2 l1.3,1.3 l2.5,-2.8" stroke-width="0.9"/></g></svg>
<div class="a" style="left:766.5px;top:390.5px;width:94.5px;height:63px;background:#fff;border:1px solid #cfcfcf;box-shadow:1px 1px 2px rgba(0,0,0,0.12)"></div>
<div class="t" style="left:793.4px;top:396.47px;font-size:8.9px;transform:scaleX(0.9282);transform-origin:0 0;color:#333">End process</div>
<div class="t" style="left:793.4px;top:417.27px;font-size:8.9px;transform:scaleX(0.9128);transform-origin:0 0;color:#333">Pause process</div>
<div class="t" style="left:793.4px;top:438.67px;font-size:8.9px;transform:scaleX(0.8833);transform-origin:0 0;color:#333">Freeze</div>
<svg style="left:0;top:0" width="1024" height="551"><path d="M772,393.6 h6 l3,3 v10.5 h-9z" fill="#3a8fd9"/><path d="M773.8,398.1 h5 M773.8,400.1 h5 M773.8,402.1 h4" stroke="#fff" stroke-width="0.8"/></svg>
<svg style="left:0;top:0" width="1024" height="551"><path d="M772,414.7 h6 l3,3 v10.5 h-9z" fill="#3a8fd9"/><path d="M773.8,419.2 h5 M773.8,421.2 h5 M773.8,423.2 h4" stroke="#fff" stroke-width="0.8"/></svg>
<svg style="left:0;top:0" width="1024" height="551"><path d="M772,435.5 h6 l3,3 v10.5 h-9z" fill="#3a8fd9"/><path d="M773.8,440.0 h5 M773.8,442.0 h5 M773.8,444.0 h4" stroke="#fff" stroke-width="0.8"/></svg>
<svg style="left:0;top:0" width="1024" height="551"><rect x="780.5" y="403" width="4" height="4" fill="#3a8fd9"/><rect x="780.5" y="424" width="1.5" height="4.5" fill="#3a8fd9"/><rect x="783" y="424" width="1.5" height="4.5" fill="#3a8fd9"/><circle cx="782.5" cy="446.5" r="2.2" fill="#fff" stroke="#6aaee8" stroke-width="1"/></svg>
</body></html>
